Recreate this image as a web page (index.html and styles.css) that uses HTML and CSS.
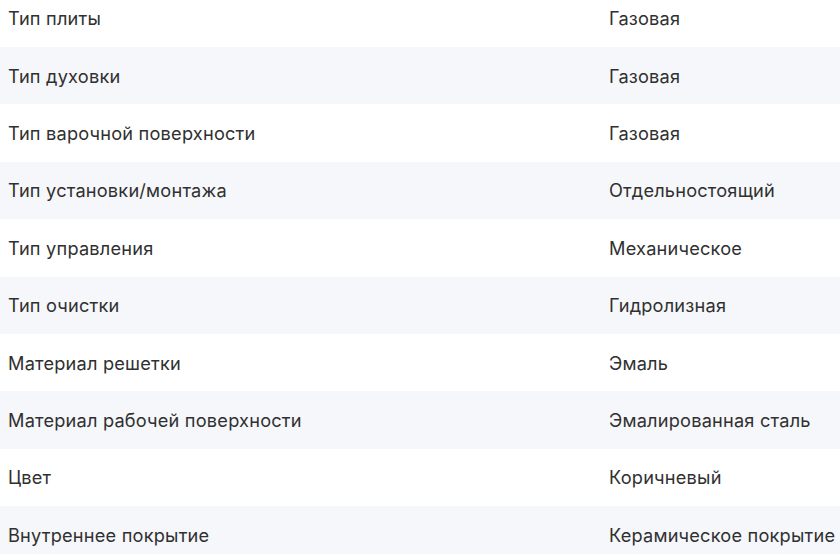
FILE: index.html
```html
<!DOCTYPE html>
<html lang="ru">
<head>
<meta charset="utf-8">
<link rel="stylesheet" href="styles.css">
</head>
<body>
<div class="specs">
  <div class="row"><div class="label">Тип плиты</div><div class="value">Газовая</div></div>
  <div class="row"><div class="label">Тип духовки</div><div class="value">Газовая</div></div>
  <div class="row"><div class="label">Тип варочной поверхности</div><div class="value">Газовая</div></div>
  <div class="row"><div class="label">Тип установки/монтажа</div><div class="value">Отдельностоящий</div></div>
  <div class="row"><div class="label">Тип управления</div><div class="value">Механическое</div></div>
  <div class="row"><div class="label">Тип очистки</div><div class="value">Гидролизная</div></div>
  <div class="row"><div class="label">Материал решетки</div><div class="value">Эмаль</div></div>
  <div class="row"><div class="label">Материал рабочей поверхности</div><div class="value">Эмалированная сталь</div></div>
  <div class="row"><div class="label">Цвет</div><div class="value">Коричневый</div></div>
  <div class="row"><div class="label">Внутреннее покрытие</div><div class="value">Керамическое покрытие</div></div>
</div>
</body>
</html>
```

FILE: styles.css
```css
html, body {
  margin: 0;
  padding: 0;
  background: #ffffff;
  overflow: hidden;
}
.specs {
  margin-top: -10.4px;
  font-family: Inter, "Liberation Sans", sans-serif;
  font-size: 18.2px;
  letter-spacing: 0.2px;
  color: #303030;
}
.row {
  display: grid;
  grid-template-columns: 601px 1fr;
  height: 57.4px;
  align-items: center;
}
.row:nth-child(even) {
  background: #f6f7fb;
}
.label, .value {
  padding-left: 8px;
  white-space: nowrap;
}
```
